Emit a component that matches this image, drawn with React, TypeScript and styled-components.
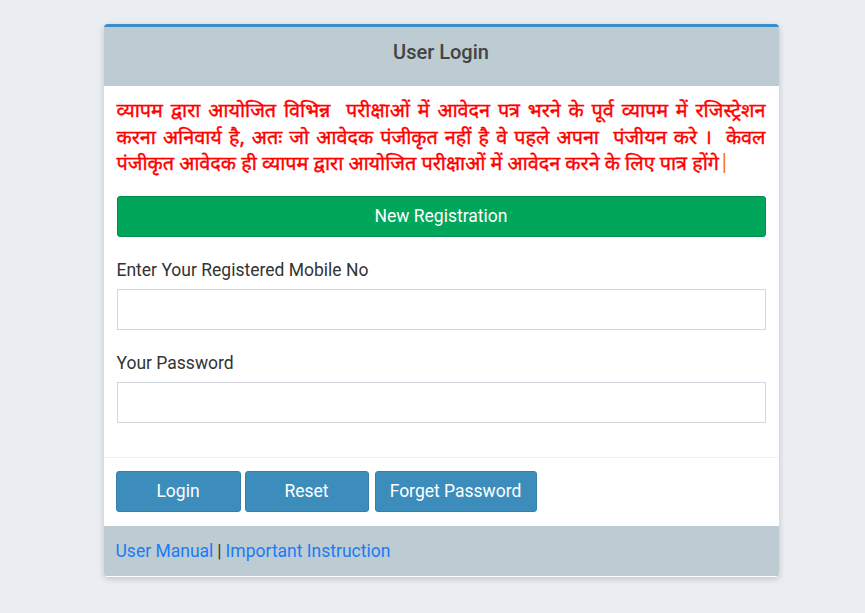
import styled, { createGlobalStyle } from "styled-components";

const GlobalStyle = createGlobalStyle`
  html, body {
    margin: 0;
    padding: 0;
    background: #eaedf2;
    font-family: Roboto, "Liberation Sans", Arial, sans-serif;
  }
`;

const Page = styled.div`
  display: flex;
  justify-content: center;
  padding: 24px 0 36px 17px;
  box-sizing: border-box;
  min-height: 613px;
`;

const Card = styled.div`
  width: 675px;
  background: #fff;
  border-top: 3px solid #3c8dc5;
  border-radius: 4px;
  box-shadow: 0 2px 6px rgba(0, 0, 0, 0.18);
  overflow: hidden;
`;

const Header = styled.div`
  height: 59px;
  box-sizing: border-box;
  padding-top: 13px;
  background: #bdcbd3;
  display: flex;
  justify-content: center;
`;

const Title = styled.h3`
  margin: 0;
  font-size: 20px;
  line-height: 24px;
  font-weight: 500;
  color: #444;
`;

const Body = styled.div`
  padding: 13px 13px 0 13px;
`;

const Notice = styled.div`
  color: #ff0000;
  font-size: 19.8px;
  line-height: 26.5px;
  -webkit-text-stroke: 0.4px #ff0000;
  font-family: "Noto Sans Devanagari", "Lohit Devanagari", "Noto Sans", sans-serif;
`;

const NoticeLine = styled.span<{ $last?: boolean }>`
  display: block;
  white-space: nowrap;
  text-align: left;
  text-align-last: ${(p) => (p.$last ? "left" : "justify")};
`;

const Bar = styled.span`
  color: #ff6a00;
  -webkit-text-stroke: 0;
`;

const WideButton = styled.button`
  display: block;
  width: 100%;
  height: 41px;
  margin-top: 17px;
  background: #00a65a;
  border: 1px solid #008d4c;
  border-radius: 3px;
  color: #fff;
  font-size: 17.5px;
  font-family: inherit;
`;

const Field = styled.div`
  margin-top: 22px;
  display: flex;
  flex-direction: column;
`;

const Label = styled.label`
  font-size: 17.5px;
  line-height: 22px;
  color: #333;
  margin-bottom: 8px;
`;

const Input = styled.input`
  height: 41px;
  box-sizing: border-box;
  border: 1px solid #d2d6de;
  padding: 6px 12px;
  font-size: 15px;
  outline: none;
`;

const Actions = styled.div`
  margin-top: 34px;
  border-top: 1px solid #f2f2f2;
  padding: 13px 12px 14px 12px;
  display: flex;
  gap: 4px;
`;

const ActionButton = styled.button<{ $w: number }>`
  width: ${(p) => p.$w}px;
  height: 41px;
  background: #3c8dbc;
  border: 1px solid #367fa9;
  border-radius: 3px;
  color: #fff;
  font-size: 17.5px;
  font-family: inherit;
  &:last-child {
    margin-left: 2px;
  }
`;

const Footer = styled.div`
  height: 50px;
  background: #bdcbd3;
  display: flex;
  align-items: center;
  padding-left: 12px;
  font-size: 17.5px;
  color: #333;
`;

const Link = styled.a`
  color: #1a7bf5;
  text-decoration: none;
`;

const Sep = styled.span`
  margin: 0 4px;
`;

export default function App() {
  return (
    <>
      <GlobalStyle />
      <Page>
        <Card>
          <Header>
            <Title>User Login</Title>
          </Header>
          <Body>
            <Notice>
              <NoticeLine>
                व्यापम द्वारा आयोजित विभिन्न&nbsp; परीक्षाओं में आवेदन पत्र भरने के पूर्व व्यापम में रजिस्ट्रेशन
              </NoticeLine>
              <NoticeLine>
                करना अनिवार्य है, अतः जो आवेदक पंजीकृत नहीं है वे पहले अपना&nbsp; पंजीयन करे ।&nbsp; केवल
              </NoticeLine>
              <NoticeLine $last>
                पंजीकृत आवेदक ही व्यापम द्वारा आयोजित परीक्षाओं में आवेदन करने के लिए पात्र होंगे<Bar>|</Bar>
              </NoticeLine>
            </Notice>
            <WideButton>New Registration</WideButton>
            <Field>
              <Label>Enter Your Registered Mobile No</Label>
              <Input type="text" />
            </Field>
            <Field>
              <Label>Your Password</Label>
              <Input type="password" />
            </Field>
          </Body>
          <Actions>
            <ActionButton $w={125}>Login</ActionButton>
            <ActionButton $w={124}>Reset</ActionButton>
            <ActionButton $w={162}>Forget Password</ActionButton>
          </Actions>
          <Footer>
            <Link href="#">User Manual</Link>
            <Sep>|</Sep>
            <Link href="#">Important Instruction</Link>
          </Footer>
        </Card>
      </Page>
    </>
  );
}
